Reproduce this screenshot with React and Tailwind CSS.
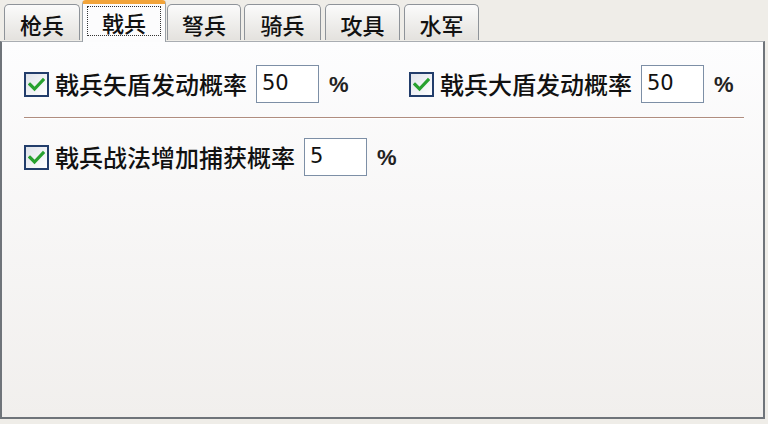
import React from 'react';

const cjk = { fontFamily: '"Noto Sans CJK SC", "Noto Sans", sans-serif' };

const tabs = [
  { id: 'qiang', label: '枪兵', w: 'w-[76px]', ml: 'ml-[4px]' },
  { id: 'ji', label: '戟兵', w: 'w-[84px]', ml: 'ml-[2px]', active: true },
  { id: 'nu', label: '弩兵', w: 'w-[74px]', ml: 'ml-[1px]' },
  { id: 'qi', label: '骑兵', w: 'w-[77px]', ml: 'ml-[3px]' },
  { id: 'gong', label: '攻具', w: 'w-[75px]', ml: 'ml-[4px]' },
  { id: 'shui', label: '水军', w: 'w-[75px]', ml: 'ml-[4px]' },
];

function Tab({ tab }) {
  if (tab.active) {
    return (
      <div
        className={`${tab.w} ${tab.ml} relative z-10 -mb-px h-[42px] rounded-t-[4px] border border-b-0 border-[#9aa0a6] border-t-[4px] border-t-[#f2a43a] bg-[#fcfcfd] px-[4px] pt-[2px]`}
      >
        <div
          className="flex h-[30px] items-center justify-center border border-dotted border-[#333] pt-[1px] text-[22px] font-medium leading-none text-[#111]"
          style={cjk}
        >
          戟兵
        </div>
      </div>
    );
  }
  return (
    <div
      className={`${tab.w} ${tab.ml} mb-px flex h-[36px] items-center justify-center rounded-t-[5px] border border-b-0 border-[#8e9399] bg-gradient-to-b from-[#fbfbfb] to-[#e4e2de] pt-[2px] text-[22px] font-medium leading-none text-[#111]`}
      style={cjk}
    >
      {tab.label}
    </div>
  );
}

function CheckBox() {
  return (
    <div className="flex h-[25px] w-[25px] shrink-0 items-center justify-center border-2 border-[#223d6b] bg-gradient-to-br from-[#dfe3ea] to-white">
      <svg width="17" height="15" viewBox="0 0 17 15">
        <path d="M2 7.5 L6.5 12 L15 3" fill="none" stroke="#27a12f" strokeWidth="3.2" strokeLinecap="square" />
      </svg>
    </div>
  );
}

function Field({ label, value }) {
  return (
    <div className="flex items-center">
      <CheckBox />
      <span className="ml-[6px] text-[24px] font-medium leading-none text-[#111]" style={cjk}>
        {label}
      </span>
      <div
        className="ml-[9px] flex h-[38px] w-[63px] items-center border border-[#7d8fa6] bg-white pl-[5px] text-[21px] text-[#111]"
        style={{ fontFamily: '"DejaVu Sans", sans-serif' }}
      >
        {value}
      </div>
      <span
        className="ml-[10px] mt-[2px] text-[22px] font-bold leading-none text-[#222]"
        style={{ fontFamily: '"Liberation Sans Narrow", "Liberation Sans", sans-serif' }}
      >
        %
      </span>
    </div>
  );
}

export default function App() {
  return (
    <div className="flex h-[424px] w-[768px] flex-col bg-[#efede8]">
      <div className="flex h-[41px] items-end">
        {tabs.map((t) => (
          <Tab key={t.id} tab={t} />
        ))}
      </div>
      <div className="mr-[3px] h-[378px] border border-l-2 border-r-2 border-b-2 border-[#6f747a] border-t-[#a9adb2] bg-gradient-to-b from-[#fdfdfe] to-[#f1efed] pl-[22px] pr-[18px]">
        <div className="mt-[23px] flex h-[38px] items-center">
          <div className="w-[385px]">
            <Field label="戟兵矢盾发动概率" value="50" />
          </div>
          <Field label="戟兵大盾发动概率" value="50" />
        </div>
        <div className="mt-[14px] mr-[1px] border-t border-b border-t-[#b08d7f] border-b-white" />
        <div className="mt-[19px] flex h-[38px] items-center">
          <Field label="戟兵战法增加捕获概率" value="5" />
        </div>
      </div>
    </div>
  );
}
